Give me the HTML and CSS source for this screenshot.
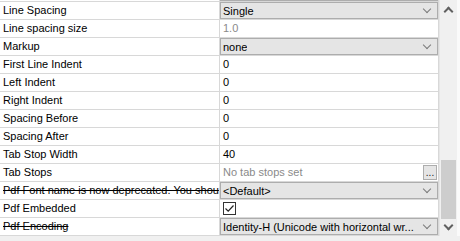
FILE: index.html
```html
<!DOCTYPE html>
<html lang="en">
<head>
    <meta charset="UTF-8">
    <title>Properties</title>
    <link rel="stylesheet" href="styles.css">
</head>
<body>
    <div class="panel">
      <div class="grid">
        <div class="rows">
          <div class="row">
            <div class="name"></div>
            <div class="value"><div class="combo"><span></span></div></div>
          </div>
          <div class="row">
            <div class="name">Line Spacing</div>
            <div class="value"><div class="combo"><span>Single</span><i class="chev"></i></div></div>
          </div>
          <div class="row">
            <div class="name">Line spacing size</div>
            <div class="value"><span class="muted">1.0</span></div>
          </div>
          <div class="row">
            <div class="name">Markup</div>
            <div class="value"><div class="combo"><span>none</span><i class="chev"></i></div></div>
          </div>
          <div class="row">
            <div class="name">First Line Indent</div>
            <div class="value"><span>0</span></div>
          </div>
          <div class="row">
            <div class="name">Left Indent</div>
            <div class="value"><span>0</span></div>
          </div>
          <div class="row">
            <div class="name">Right Indent</div>
            <div class="value"><span>0</span></div>
          </div>
          <div class="row">
            <div class="name">Spacing Before</div>
            <div class="value"><span>0</span></div>
          </div>
          <div class="row">
            <div class="name">Spacing After</div>
            <div class="value"><span>0</span></div>
          </div>
          <div class="row">
            <div class="name">Tab Stop Width</div>
            <div class="value"><span>40</span></div>
          </div>
          <div class="row">
            <div class="name">Tab Stops</div>
            <div class="value"><span class="muted">No tab stops set</span><button class="dots">...</button></div>
          </div>
          <div class="row">
            <div class="name struck">Pdf Font name is now deprecated. You shou</div>
            <div class="value"><div class="combo"><span>&lt;Default&gt;</span><i class="chev"></i></div></div>
          </div>
          <div class="row">
            <div class="name">Pdf Embedded</div>
            <div class="value">
              <svg class="check" width="13" height="13" viewBox="0 0 13 13">
                <rect x="0.5" y="0.5" width="12" height="12" fill="#fff" stroke="#333"/>
                <path d="M2.5 6.5 L5.2 9.2 L10.5 3.5" fill="none" stroke="#222" stroke-width="1.2"/>
              </svg>
            </div>
          </div>
          <div class="row">
            <div class="name struck">Pdf Encoding</div>
            <div class="value"><div class="combo"><span>Identity-H (Unicode with horizontal wr...</span><i class="chev"></i></div></div>
          </div>
        </div>
        <div class="scrollbar">
          <div class="arrow up"></div>
          <div class="track"><div class="thumb"></div></div>
          <div class="arrow down"></div>
        </div>
        <div class="edge"></div>
      </div>
      <div class="footer"></div>
    </div>
</body>
</html>
```

FILE: styles.css
```css
body { margin: 0; font-family: "Liberation Sans", Arial, sans-serif; font-size: 11px; color: #000; background: #f0f0f0; }
.panel { width: 460px; height: 241px; overflow: hidden; }
.grid { display: flex; height: 236px; overflow: hidden; background: #fff; }
.rows { width: 439px; margin-top: -16px; }
.row { display: flex; height: 17px; border-bottom: 1px solid #d8d8d8; }
.name { width: 216px; padding-left: 3px; border-right: 1px solid #d8d8d8; white-space: nowrap; overflow: hidden; line-height: 17px; }
.struck { text-decoration: line-through; }
.value { width: 218px; border-right: 1px solid #d8d8d8; display: flex; align-items: center; position: relative; }
.value > span { padding-left: 3px; line-height: 17px; }
.muted { color: #8a8a8a; }
.combo { flex: 1; height: 17px; box-sizing: border-box; background: #e5e5e5; border: 1px solid #adadad; display: flex; align-items: center; justify-content: space-between; }
.combo span { padding-left: 2px; white-space: nowrap; overflow: hidden; }
.chev { width: 5px; height: 5px; border-right: 1px solid #7a7a7a; border-bottom: 1px solid #7a7a7a; transform: rotate(45deg); margin: -3px 7px 0 0; }
.dots { position: absolute; right: 1px; top: 1px; width: 14px; height: 15px; padding: 0; border: 1px solid #adadad; background: #e5e5e5; font-family: inherit; font-size: 10px; line-height: 10px; color: #222; }
.check { margin-left: 3px; }
.scrollbar { width: 17px; background: #f0f0f0; display: flex; flex-direction: column; border-left: 1px solid #e6e6e6; }
.arrow { height: 17px; display: flex; justify-content: center; }
.arrow::before { content: ""; width: 5px; height: 5px; border-left: 2px solid #606060; border-top: 2px solid #606060; }
.arrow.up::before { transform: rotate(45deg); margin-top: 8px; }
.arrow.down::before { transform: rotate(225deg); margin-top: 3px; }
.track { flex: 1; padding: 0 1px; }
.thumb { margin-top: 143px; height: 59px; background: #cdcdcd; }
.edge { width: 3px; background: #fafafa; }
.footer { height: 5px; background: #f0f0f0; }
```
